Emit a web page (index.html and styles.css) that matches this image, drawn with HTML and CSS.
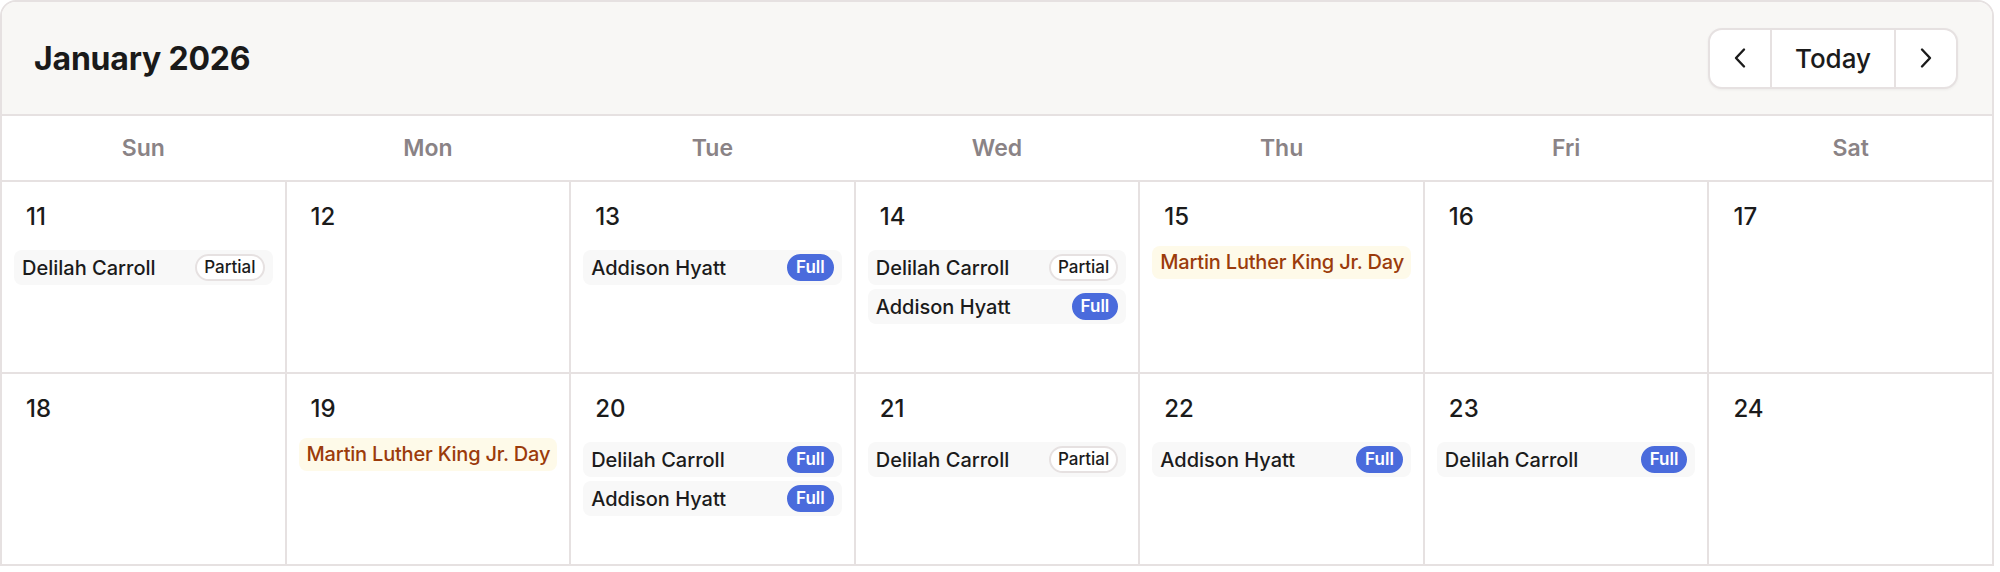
FILE: index.html
```html
<!DOCTYPE html>
<html>
<head>
<title>January 2026</title>
<link rel="stylesheet" href="styles.css">
</head>
<body>
    <div class="calendar">
        <header class="cal-header">
            <h1 class="cal-title">January 2026</h1>
            <div class="nav-group">
                <button class="nav-btn nav-arrow" aria-label="Previous week">
                    <svg width="14" height="22" viewBox="0 0 14 22"><polyline points="11,2.5 3,11 11,19.5"/></svg>
                </button>
                <button class="nav-btn nav-today">Today</button>
                <button class="nav-btn nav-arrow" aria-label="Next week">
                    <svg width="14" height="22" viewBox="0 0 14 22"><polyline points="3,2.5 11,11 3,19.5"/></svg>
                </button>
            </div>
        </header>

        <div class="weekdays">
            <div class="weekday">Sun</div>
            <div class="weekday">Mon</div>
            <div class="weekday">Tue</div>
            <div class="weekday">Wed</div>
            <div class="weekday">Thu</div>
            <div class="weekday">Fri</div>
            <div class="weekday">Sat</div>
        </div>

        <div class="days">
            <!-- week of the 11th -->
            <div class="day">
                <div class="day-num">11</div>
                <div class="event"><span>Delilah Carroll</span><span class="badge badge-partial">Partial</span></div>
            </div>
            <div class="day">
                <div class="day-num">12</div>
            </div>
            <div class="day">
                <div class="day-num">13</div>
                <div class="event"><span>Addison Hyatt</span><span class="badge badge-full">Full</span></div>
            </div>
            <div class="day">
                <div class="day-num">14</div>
                <div class="event"><span>Delilah Carroll</span><span class="badge badge-partial">Partial</span></div>
                <div class="event"><span>Addison Hyatt</span><span class="badge badge-full">Full</span></div>
            </div>
            <div class="day">
                <div class="day-num">15</div>
                <div class="holiday">Martin Luther King Jr. Day</div>
            </div>
            <div class="day">
                <div class="day-num">16</div>
            </div>
            <div class="day">
                <div class="day-num">17</div>
            </div>

            <!-- week of the 18th -->
            <div class="day">
                <div class="day-num">18</div>
            </div>
            <div class="day">
                <div class="day-num">19</div>
                <div class="holiday">Martin Luther King Jr. Day</div>
            </div>
            <div class="day">
                <div class="day-num">20</div>
                <div class="event"><span>Delilah Carroll</span><span class="badge badge-full">Full</span></div>
                <div class="event"><span>Addison Hyatt</span><span class="badge badge-full">Full</span></div>
            </div>
            <div class="day">
                <div class="day-num">21</div>
                <div class="event"><span>Delilah Carroll</span><span class="badge badge-partial">Partial</span></div>
            </div>
            <div class="day">
                <div class="day-num">22</div>
                <div class="event"><span>Addison Hyatt</span><span class="badge badge-full">Full</span></div>
            </div>
            <div class="day">
                <div class="day-num">23</div>
                <div class="event"><span>Delilah Carroll</span><span class="badge badge-full">Full</span></div>
            </div>
            <div class="day">
                <div class="day-num">24</div>
            </div>
        </div>
    </div>
</body>
</html>
```

FILE: styles.css
```css
body {
    margin: 0;
    background: #fff;
    color: #1b1b1b;
    font-family: Inter, "Noto Sans", sans-serif;
}

.calendar {
    width: 1994px;
    box-sizing: border-box;
    border: 2px solid #e6e1e1;
    border-radius: 16px 16px 0 0;
    overflow: hidden;
}

/* header with month title and week navigation */
.cal-header {
    height: 112px;
    display: flex;
    align-items: center;
    justify-content: space-between;
    padding: 0 34px 0 32px;
    background: #f8f7f5;
    border-bottom: 2px solid #e6e1e1;
}
.cal-title {
    margin: 0;
    font-size: 32px;
    font-weight: 700;
    letter-spacing: -0.2px;
    color: #1a1a1a;
}
.nav-group {
    display: flex;
    background: #fff;
    border: 2px solid #e6e1e1;
    border-radius: 14px;
    overflow: hidden;
    box-shadow: 0 1px 3px rgba(0, 0, 0, 0.05);
}
.nav-btn {
    height: 57px;
    display: flex;
    align-items: center;
    justify-content: center;
    padding: 0;
    border: none;
    background: none;
    color: #1b1b1b;
    font-family: inherit;
    cursor: pointer;
}
.nav-arrow {
    width: 60px;
}
.nav-arrow svg {
    fill: none;
    stroke: #1b1b1b;
    stroke-width: 2.4;
    stroke-linecap: round;
    stroke-linejoin: round;
}
.nav-today {
    width: 126px;
    box-sizing: border-box;
    border-left: 2px solid #e6e1e1;
    border-right: 2px solid #e6e1e1;
    font-size: 26px;
    font-weight: 500;
}

/* weekday labels */
.weekdays {
    display: grid;
    grid-template-columns: repeat(7, 1fr);
    gap: 2px;
    height: 64px;
    border-bottom: 2px solid #e6e1e1;
}
.weekday {
    display: flex;
    align-items: center;
    justify-content: center;
    font-size: 23px;
    font-weight: 600;
    color: #8a8386;
}

/* day grid, the gap shows through as the cell borders */
.days {
    display: grid;
    grid-template-columns: repeat(7, 1fr);
    grid-auto-rows: 190px;
    gap: 2px;
    background: #e6e1e1;
}
.day {
    background: #fff;
    padding: 12px;
    min-width: 0;
}
.day-num {
    padding: 7px 12px 13px;
    font-size: 24px;
    line-height: 32px;
    font-weight: 500;
}

.event {
    margin-top: 4px;
    display: flex;
    align-items: center;
    justify-content: space-between;
    padding: 4px 8px;
    background: #f8f8f8;
    border-radius: 8px;
    font-size: 20px;
    line-height: 26px;
    font-weight: 500;
}
.badge {
    display: block;
    font-size: 17px;
    line-height: 23px;
    padding: 0 7px;
    border: 2px solid;
    border-radius: 999px;
}
.badge-partial {
    background: #fff;
    border-color: #e6e1e1;
    color: #1b1b1b;
    font-weight: 500;
}
.badge-full {
    background: #4a6bdc;
    border-color: #4a6bdc;
    color: #fff;
    font-weight: 600;
}

.holiday {
    padding: 4px 8px;
    background: #fefae9;
    color: #9b3b0b;
    border-radius: 8px;
    font-size: 20px;
    line-height: 25px;
    font-weight: 500;
    letter-spacing: -0.2px;
    white-space: nowrap;
    overflow: hidden;
}
```
